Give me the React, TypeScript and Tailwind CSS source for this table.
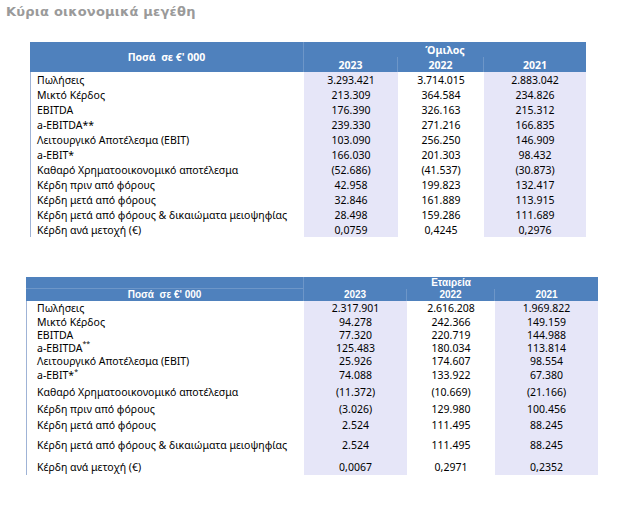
import type { ReactNode } from 'react';

type Row = {
  label: ReactNode;
  values: [string, string, string];
  h: string;
};

const groupRows: Row[] = [
  { label: 'Πωλήσεις', values: ['3.293.421', '3.714.015', '2.883.042'], h: 'h-[15px]' },
  { label: 'Μικτό Κέρδος', values: ['213.309', '364.584', '234.826'], h: 'h-[15px]' },
  { label: 'EBITDA', values: ['176.390', '326.163', '215.312'], h: 'h-[15px]' },
  { label: 'a-EBITDA**', values: ['239.330', '271.216', '166.835'], h: 'h-[15px]' },
  { label: 'Λειτουργικό Αποτέλεσμα (EBIT)', values: ['103.090', '256.250', '146.909'], h: 'h-[15px]' },
  { label: 'a-EBIT*', values: ['166.030', '201.303', '98.432'], h: 'h-[15px]' },
  { label: 'Καθαρό Χρηματοοικονομικό αποτέλεσμα', values: ['(52.686)', '(41.537)', '(30.873)'], h: 'h-[15px]' },
  { label: 'Κέρδη πριν από φόρους', values: ['42.958', '199.823', '132.417'], h: 'h-[15px]' },
  { label: 'Κέρδη μετά από φόρους', values: ['32.846', '161.889', '113.915'], h: 'h-[15px]' },
  { label: 'Κέρδη μετά από φόρους & δικαιώματα μειοψηφίας', values: ['28.498', '159.286', '111.689'], h: 'h-[15px]' },
  { label: 'Κέρδη ανά μετοχή (€)', values: ['0,0759', '0,4245', '0,2976'], h: 'h-[15px]' },
];

const companyRows: Row[] = [
  { label: 'Πωλήσεις', values: ['2.317.901', '2.616.208', '1.969.822'], h: 'h-[14px]' },
  { label: 'Μικτό Κέρδος', values: ['94.278', '242.366', '149.159'], h: 'h-[13px]' },
  { label: 'EBITDA', values: ['77.320', '220.719', '144.988'], h: 'h-[13px]' },
  {
    label: (
      <>
        a-EBITDA<sup className="text-[7px]">**</sup>
      </>
    ),
    values: ['125.483', '180.034', '113.814'],
    h: 'h-[13px]',
  },
  { label: 'Λειτουργικό Αποτέλεσμα (EBIT)', values: ['25.926', '174.607', '98.554'], h: 'h-[13px]' },
  {
    label: (
      <>
        a-EBIT*<sup className="text-[7px]">*</sup>
      </>
    ),
    values: ['74.088', '133.922', '67.380'],
    h: 'h-[16px]',
  },
  { label: 'Καθαρό Χρηματοοικονομικό αποτέλεσμα', values: ['(11.372)', '(10.669)', '(21.166)'], h: 'h-[18px]' },
  { label: 'Κέρδη πριν από φόρους', values: ['(3.026)', '129.980', '100.456'], h: 'h-[16px]' },
  { label: 'Κέρδη μετά από φόρους', values: ['2.524', '111.495', '88.245'], h: 'h-[15px]' },
  { label: 'Κέρδη μετά από φόρους & δικαιώματα μειοψηφίας', values: ['2.524', '111.495', '88.245'], h: 'h-[26px]' },
  { label: 'Κέρδη ανά μετοχή (€)', values: ['0,0067', '0,2971', '0,2352'], h: 'h-[17px]' },
];

const years = ['2023', '2022', '2021'];

function DataRows({ rows, pad }: { rows: Row[]; pad: string }) {
  return (
    <>
      {rows.map((r, i) => (
        <div key={i} className="contents">
          <div className={`${r.h} ${pad} flex items-center border-l border-[#9fb3d6] bg-white`}>
            {r.label}
          </div>
          <div className={`${r.h} flex items-center justify-center bg-[#e6e6f8]`}>{r.values[0]}</div>
          <div className={`${r.h} flex items-center justify-center bg-white`}>{r.values[1]}</div>
          <div className={`${r.h} flex items-center justify-center bg-[#e6e6f8]`}>{r.values[2]}</div>
        </div>
      ))}
    </>
  );
}

export default function App() {
  return (
    <div className="h-[508px] w-[624px] overflow-hidden bg-white">
      {/* Title */}
      <h1 className="px-[6px] pt-[4px] font-['DejaVu_Sans',sans-serif] text-[13px] font-bold leading-[16px] tracking-[0.2px] text-[#9a9a9a]">
        Κύρια οικονομικά μεγέθη
      </h1>

      {/* Όμιλος */}
      <div className="ml-[30px] mt-[22px] grid w-[556px] grid-cols-[274px_94px_86px_102px] font-['Noto_Sans',sans-serif] text-[10.5px] leading-[14px] text-black">
        <div className="row-span-2 flex items-center justify-center border-r border-[#6d96c8] bg-[#4f81bd] font-bold text-white">
          Ποσά&nbsp; σε €&apos; 000
        </div>
        <div className="col-span-3 flex h-[15px] items-center justify-center bg-[#4f81bd] font-bold text-white">
          Όμιλος
        </div>
        {years.map((y, i) => (
          <div
            key={y}
            className={`flex h-[15px] items-center justify-center bg-[#4f81bd] font-bold text-white ${
              i < 2 ? 'border-r border-[#6d96c8]' : ''
            }`}
          >
            {y}
          </div>
        ))}
        <DataRows rows={groupRows} pad="pl-[6px]" />
      </div>

      {/* Εταιρεία */}
      <div className="ml-[26px] mt-[40px] grid w-[572px] grid-cols-[278px_103px_88px_103px] font-['Noto_Sans',sans-serif] text-[10.5px] leading-[12px] text-black">
        <div className="h-[12px] border-b border-r border-[#6d96c8] bg-[#4f81bd]" />
        <div className="col-span-3 flex h-[12px] items-center justify-center bg-[#4f81bd] font-['Liberation_Sans',sans-serif] text-[10px] font-bold text-white">
          Εταιρεία
        </div>
        <div className="flex h-[12px] items-center justify-center border-r border-[#6d96c8] bg-[#4f81bd] font-['Liberation_Sans',sans-serif] text-[10px] font-bold text-white">
          Ποσά&nbsp; σε €&apos; 000
        </div>
        {years.map((y, i) => (
          <div
            key={y}
            className={`flex h-[12px] items-center justify-center bg-[#4f81bd] font-['Liberation_Sans',sans-serif] text-[10px] font-bold text-white ${
              i < 2 ? 'border-r border-[#6d96c8]' : ''
            }`}
          >
            {y}
          </div>
        ))}
        <DataRows rows={companyRows} pad="pl-[10px]" />
      </div>
    </div>
  );
}
